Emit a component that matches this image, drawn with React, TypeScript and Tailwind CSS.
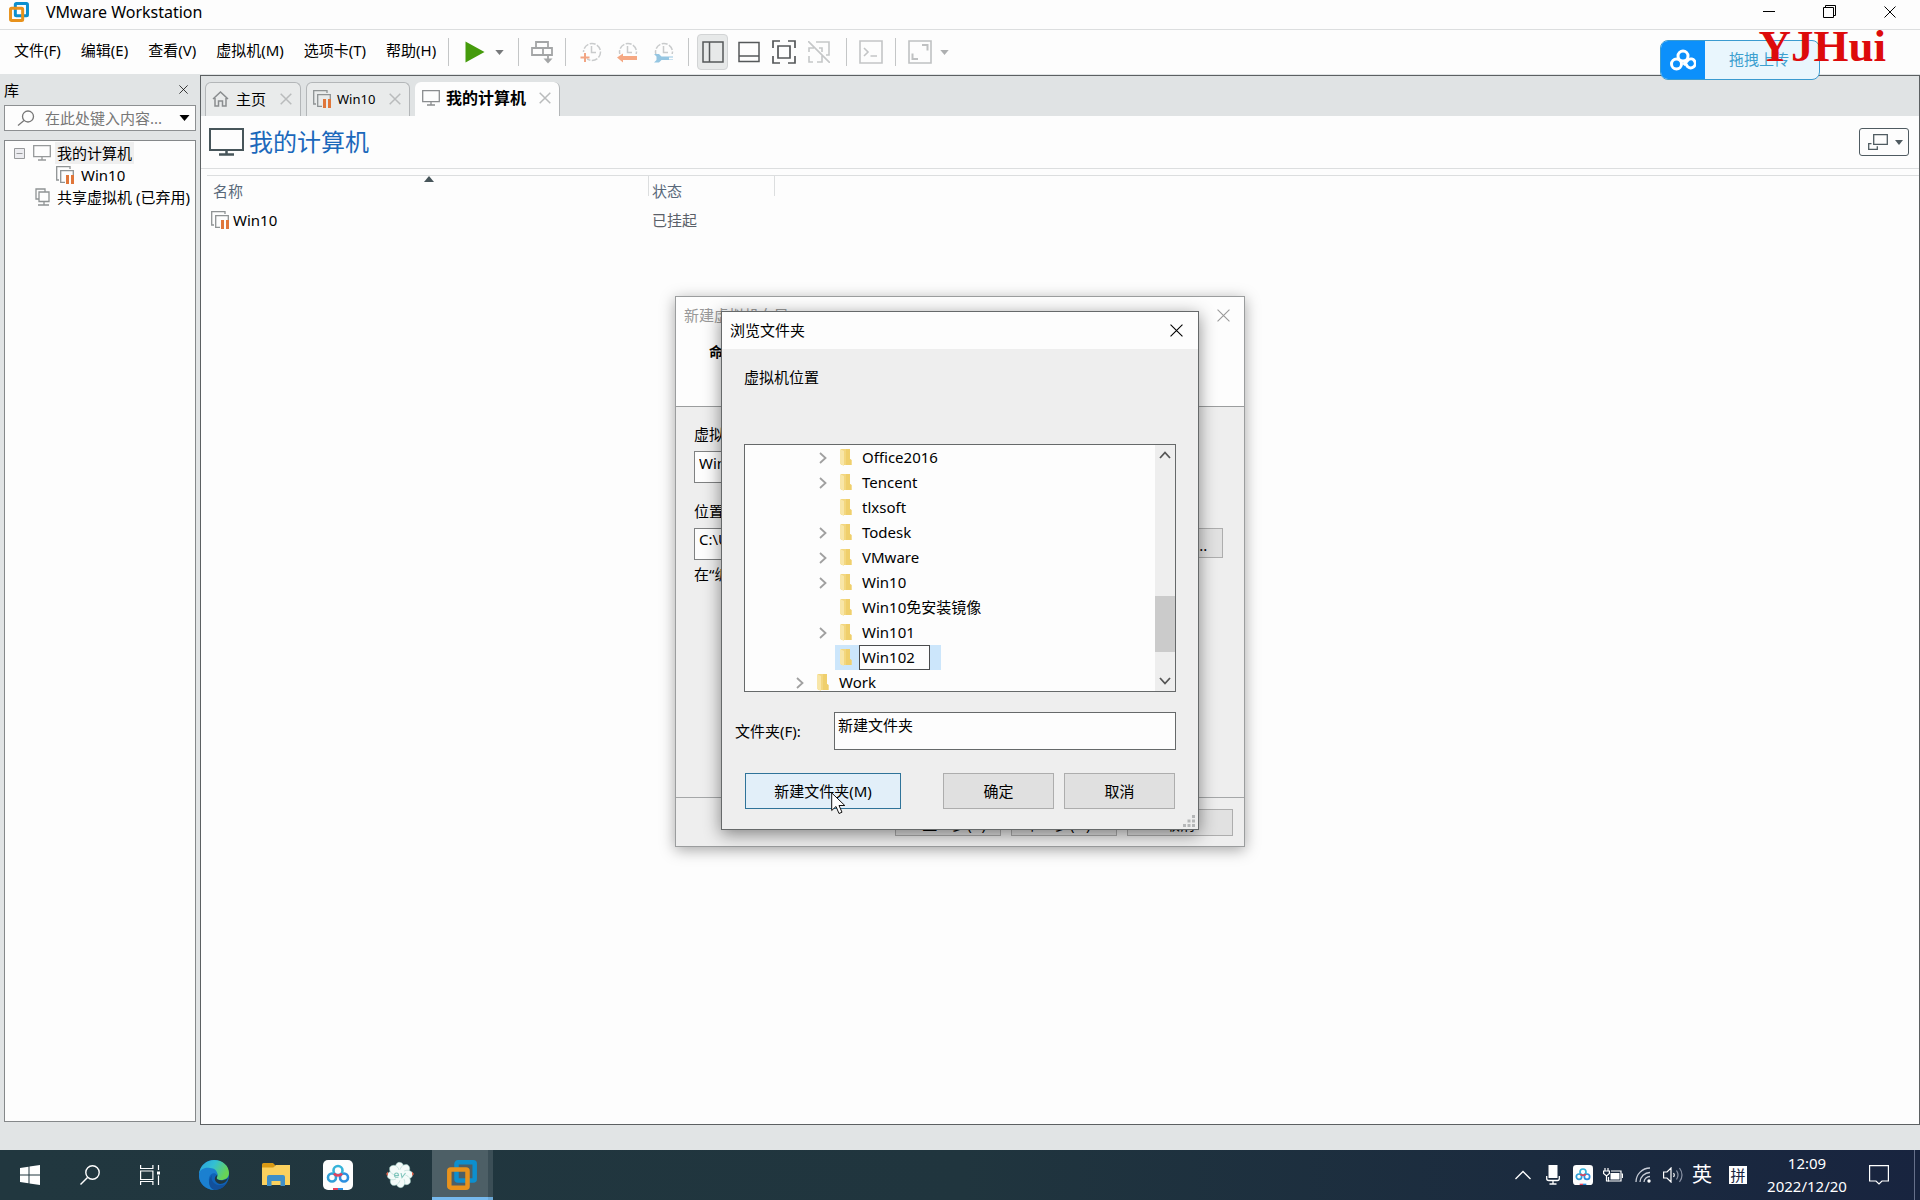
import React, { useState } from 'react';

type IconProps = { className?: string };

const VmLogo = ({ className }: IconProps) => (
  <svg viewBox="0 0 30 30" className={className} fill="none" strokeWidth="4.500">
    <rect x="9.500" y="2.300" width="18.200" height="18.200" rx="1.500" stroke="#0d8fce" />
    <rect x="2.300" y="9.500" width="18.200" height="18.200" rx="1.500" stroke="#e8921c" />
  </svg>
);

const CloseIcon = ({ className }: IconProps) => (
  <svg viewBox="0 0 12 12" className={className} stroke="currentColor" fill="none">
    <path d="M.5.5l11 11M11.5.5l-11 11" />
  </svg>
);

const TabCloseIcon = () => (
  <svg viewBox="0 0 12 12" className="size-3" stroke="#b9bbbc" strokeWidth="1.500" fill="none">
    <path d="M.7.7l10.600 10.600M11.300.7L.7 11.300" />
  </svg>
);

const Caret = ({ className }: IconProps) => (
  <svg viewBox="0 0 10 6" className={className} fill="currentColor">
    <path d="M0 0h10L5 6z" />
  </svg>
);

const MonitorIcon = ({ className }: IconProps) => (
  <svg viewBox="0 0 18 16" className={className} fill="none" stroke="currentColor" strokeWidth="1.300">
    <path d="M.7.7h16.600v11H.7zM9 12v3M5 15h8" />
  </svg>
);

const SuspendedVmIcon = ({ className }: IconProps) => (
  <svg viewBox="0 0 19 18" className={className} fill="none">
    <path d="M3 14H.7V.7H14V3" stroke="#8f9394" strokeWidth="1.300" />
    <path d="M9 16.300H4.700V4.700h12.600V9" stroke="#8f9394" strokeWidth="1.300" />
    <path d="M10 9h3v9h-3zM15 9h3v9h-3z" fill="#e0763a" />
  </svg>
);

const CloudRings = ({ className }: IconProps) => (
  <svg viewBox="0 0 26 22" className={className} fill="none" stroke="currentColor" strokeWidth="3">
    <circle cx="13" cy="7" r="5" />
    <circle cx="6.500" cy="15" r="5" />
    <path d="M14 12l3.500 5.500a4.500 4.500 0 1 0 1-7l-5 5.500" />
  </svg>
);

const NetdiskRings = ({ className }: IconProps) => (
  <svg viewBox="0 0 30 30" className={className}>
    <rect width="30" height="30" rx="5" fill="#fdfdfd" />
    <g fill="none" strokeWidth="2.600">
      <circle cx="9" cy="17.500" r="4" stroke="#2f9fd8" />
      <circle cx="21" cy="17.500" r="4" stroke="#2b8fe0" />
      <circle cx="15" cy="10.500" r="4.500" stroke="#35b3d9" />
      <path d="M11 13.500a5 5 0 0 0 8 0" stroke="#e2405c" />
    </g>
    <path d="M10 28h5v2h-5z" fill="#e2405c" />
    <path d="M15 28h5v2h-5z" fill="#2b8fe0" />
  </svg>
);

const MENUS = ['文件(F)', '编辑(E)', '查看(V)', '虚拟机(M)', '选项卡(T)', '帮助(H)'];

const Separator = () => <span className="h-7 w-px shrink-0 bg-[#c4c6c7]" />;

const SnapshotClock = ({ children }: { children: React.ReactNode }) => (
  <svg viewBox="0 0 22 22" className="size-[22px]" fill="none">
    <g stroke="#c9cbcc" strokeWidth="1.500">
      <circle cx="12" cy="11" r="8.500" strokeDasharray="6 1.500" />
      <path d="M11.500 5v6.500H16" />
    </g>
    {children}
  </svg>
);

const Toolbar = () => (
  <div className="flex h-[45px] shrink-0 items-center border-t border-[#dcdedf] pl-3.5">
    <nav className="flex gap-5 pb-1">
      {MENUS.map((menu) => (
        <button key={menu}>{menu}</button>
      ))}
    </nav>
    <div className="ml-3 flex items-center">
      <Separator />
      <button aria-label="开机" className="ml-4">
        <svg viewBox="0 0 20 22" className="h-[22px] w-5" fill="#459b0c">
          <path d="M.5.5L19.500 11 .5 21.500z" />
        </svg>
      </button>
      <button aria-label="电源选项" className="ml-2.5 mr-3.5 text-[#77797b]">
        <Caret className="h-[5px] w-[9px]" />
      </button>
      <Separator />
      <button aria-label="发送按键" className="mx-3">
        <svg viewBox="0 0 22 24" className="h-6 w-[22px]" fill="none" stroke="#a3a5a6" strokeWidth="1.800">
          <path d="M5 8V2h12v6M1 8h20v7H1zM12 8v7M17 14v8" />
          <path d="M12.500 18.500h9L17 23.500z" fill="#a3a5a6" stroke="none" />
        </svg>
      </button>
      <Separator />
      <button aria-label="拍摄快照" className="ml-3.5">
        <SnapshotClock>
          <path d="M0 11h7v11H0z" fill="#fdfdfd" />
          <path d="M5 12v9M.5 16.500h9" stroke="#f2a583" strokeWidth="2" />
        </SnapshotClock>
      </button>
      <button aria-label="恢复快照" className="ml-3.5">
        <SnapshotClock>
          <path d="M0 13h22v9H0z" fill="#fdfdfd" />
          <path d="M1 16.500L7 12.500v2.500h14v4H7v2.500z" fill="#f5a883" />
        </SnapshotClock>
      </button>
      <button aria-label="管理快照" className="ml-3.5 mr-3.5">
        <SnapshotClock>
          <path d="M0 13h22v9H0z" fill="#fdfdfd" />
          <path d="M2 13h5l2.500 2.500H21v3.500H9.500L7 21.500H2L4.500 19v-3.500z" fill="#95c6e2" />
          <path d="M17 16.500h5v2h-5z" fill="#fdfdfd" />
        </SnapshotClock>
      </button>
      <Separator />
      <button aria-label="显示库" className="ml-2 flex h-9 w-[31px] items-center justify-center rounded border border-[#d2d4d5] bg-[#e7e9e9]">
        <svg viewBox="0 0 22 22" className="size-[22px]" fill="none" stroke="#55585a" strokeWidth="1.500">
          <path d="M1 1h20v20H1zM7.500 1v20" />
        </svg>
      </button>
      <button aria-label="显示缩略图栏" className="ml-2.5">
        <svg viewBox="0 0 22 22" className="size-[22px]" fill="none" stroke="#55585a" strokeWidth="1.500">
          <path d="M1 1.500h20v19H1zM1 15h20" />
        </svg>
      </button>
      <button aria-label="全屏" className="ml-3">
        <svg viewBox="0 0 24 24" className="size-6" fill="none" stroke="#55585a" strokeWidth="1.700">
          <path d="M1 8V1h7M16 1h7v7M23 16v7h-7M8 23H1v-7M6 6h12v12H6z" />
        </svg>
      </button>
      <button aria-label="Unity" className="ml-3 mr-4">
        <svg viewBox="0 0 22 22" className="size-[22px]" fill="none" stroke="#c5c7c8" strokeWidth="1.600">
          <path d="M8 1h13v13h-3M6 7H1v4M1 15v6h4M9 21h5v-7M11 7h3v4M0 0l22 22" />
        </svg>
      </button>
      <Separator />
      <button aria-label="控制台" className="mx-3">
        <svg viewBox="0 0 24 24" className="size-6" fill="none" stroke="#c3c5c6" strokeWidth="1.600">
          <path d="M1 1h22v22H1zM5 8l4 4-4 4M11.500 16H18" />
        </svg>
      </button>
      <Separator />
      <button aria-label="自由拉伸" className="ml-3">
        <svg viewBox="0 0 24 24" className="size-6" fill="none" stroke="#bfc1c2" strokeWidth="1.600">
          <path d="M1 1h22v22H1z" />
          <path d="M14 5h5.500v5.500M4.500 13.500v5.500H10" strokeWidth="2" />
        </svg>
      </button>
      <button aria-label="拉伸选项" className="ml-2 text-[#adafb0]">
        <Caret className="h-[5px] w-[9px]" />
      </button>
    </div>
  </div>
);

const Library = () => (
  <aside className="flex w-[200px] shrink-0 flex-col pb-[3px] pl-1 pr-1">
    <div className="flex h-[31px] items-center justify-between pr-2">
      <h2>库</h2>
      <button aria-label="关闭库">
        <CloseIcon className="size-[9px]" />
      </button>
    </div>
    <div className="flex h-[26px] items-center border border-[#8d9092] bg-[#fdfdfd] pl-3 pr-[5px] text-[#777]">
      <svg viewBox="0 0 18 16" className="h-4 w-[18px] shrink-0" fill="none" stroke="currentColor" strokeWidth="1.300">
        <circle cx="11" cy="6.500" r="5.500" />
        <path d="M7 10.500L1 15.500" />
      </svg>
      <input
        aria-label="搜索库"
        placeholder="在此处键入内容..."
        className="ml-2.5 w-full min-w-0 flex-1 bg-transparent outline-none placeholder:text-[#777]"
      />
      <button aria-label="搜索选项" className="text-black">
        <Caret className="h-1.5 w-[11px]" />
      </button>
    </div>
    <ul className="mt-[9px] flex-1 overflow-hidden whitespace-nowrap border border-[#85888a] bg-[#fdfdfd] pt-px leading-[22px]">
      <li className="flex items-center pl-[9px]">
        <svg viewBox="0 0 11 11" className="size-[11px]" fill="#ececf0" stroke="#97999b">
          <path d="M.5.5h10v10H.5zM2.500 5.500h6" />
        </svg>
        <MonitorIcon className="ml-2 h-4 w-[18px] text-[#96999a]" />
        <span className="ml-1 bg-[#efefef] px-0.5">我的计算机</span>
      </li>
      <li className="flex items-center pl-[51px]">
        <SuspendedVmIcon className="h-[18px] w-[19px]" />
        <span className="ml-1.5">Win10</span>
      </li>
      <li className="flex items-center pl-[30px]">
        <svg viewBox="0 0 15 18" className="h-[18px] w-[15px]" fill="none" stroke="#8f9394" strokeWidth="1.300">
          <path d="M4 11H1V1h9v3M4 4h10v9.500H4zM9 14v3M3 17h11" />
        </svg>
        <span className="ml-[7px]">共享虚拟机 (已弃用)</span>
      </li>
    </ul>
  </aside>
);

const Tabs = () => (
  <div className="flex h-10 items-end bg-[#e0e3e4] pl-1">
    <div className="flex h-[34px] w-24 items-center rounded-t-md border border-b-0 border-[#b3b6b8] bg-[#e9ebeb] pb-0.5 pl-1.5 pr-2">
      <svg viewBox="0 0 17 16" className="h-4 w-[17px]" fill="none" stroke="#8a8d8f" strokeWidth="1.500">
        <path d="M1 8l7.500-7L16 8M3 7v8h3.500v-5h4v5H14V7" />
      </svg>
      <button className="ml-[7px]">主页</button>
      <button aria-label="关闭主页" className="ml-auto">
        <TabCloseIcon />
      </button>
    </div>
    <div className="ml-[5px] flex h-[34px] w-[104px] items-center rounded-t-md border border-b-0 border-[#b3b6b8] bg-[#e9ebeb] pb-0.5 pl-1.5 pr-2">
      <SuspendedVmIcon className="h-[18px] w-[19px]" />
      <button className="ml-[5px] text-[13px]">Win10</button>
      <button aria-label="关闭 Win10" className="ml-auto">
        <TabCloseIcon />
      </button>
    </div>
    <div className="ml-[5px] flex h-[34px] w-[145px] items-center rounded-t-md border-r border-[#b3b6b8] bg-[#fdfdfd] pb-0.5 pl-[7px] pr-2">
      <MonitorIcon className="h-4 w-[18px] text-[#8a8d8f]" />
      <button className="ml-1.5 whitespace-nowrap text-base font-bold">我的计算机</button>
      <button aria-label="关闭我的计算机" className="ml-auto">
        <TabCloseIcon />
      </button>
    </div>
  </div>
);

const Workspace = () => (
  <main className="mt-px flex flex-1 flex-col border border-[#5c6062] bg-[#fdfdfd]">
    <Tabs />
    <div className="flex h-[53px] items-center border-b border-[#dcdedf] pl-2 pr-2.5">
      <svg viewBox="0 0 35 28" className="h-7 w-[35px]" fill="none" stroke="#47555a">
        <path d="M1 1h33v21H1z" strokeWidth="2" />
        <path d="M17.500 22v4M10 26.500h15" strokeWidth="2.500" />
      </svg>
      <h1 className="ml-[5px] text-2xl text-[#1b68bb]">我的计算机</h1>
      <button aria-label="查看模式" className="ml-auto flex h-7 w-[50px] items-center rounded-[3px] border border-[#4f5b61] pl-2 text-[#4f5b61]">
        <svg viewBox="0 0 20 16" className="h-4 w-5" fill="none" stroke="currentColor" strokeWidth="1.300">
          <path d="M5.700.7h13.600v9.600H5.700zM3.500 9.700H.7v5.600h8.600v-3" />
        </svg>
        <Caret className="ml-[7px] h-[5px] w-2" />
      </button>
    </div>
    <table className="ml-1.5 mt-1.5 table-fixed border-t border-[#dcdedf] text-left text-[#5a6068]">
      <thead>
        <tr className="h-[30px]">
          <th className="relative w-[442px] pl-1.5 font-normal text-[#58687a]">
            名称
            <Caret className="absolute right-[215px] top-0 h-1.5 w-2.5 rotate-180 text-[#47555a]" />
            <span className="absolute right-0 top-0 h-5 w-px bg-[#dcdedf]" />
          </th>
          <th className="relative w-[126px] pl-[3px] font-normal text-[#58687a]">
            状态
            <span className="absolute right-0 top-0 h-5 w-px bg-[#dcdedf]" />
          </th>
          <th />
        </tr>
      </thead>
      <tbody>
        <tr className="h-7">
          <td>
            <div className="flex items-center pl-1 text-black">
              <SuspendedVmIcon className="h-[18px] w-[19px]" />
              <span className="ml-[3px]">Win10</span>
            </div>
          </td>
          <td className="pl-[3px]">已挂起</td>
          <td />
        </tr>
      </tbody>
    </table>
  </main>
);

const WizardDialog = () => (
  <section
    aria-label="新建虚拟机向导"
    className="absolute left-1/2 top-[296px] flex h-[551px] w-[570px] -translate-x-1/2 flex-col border border-[#9b9d9e] bg-[#eee] shadow-[0_3px_14px_rgba(0,0,0,0.35)]"
  >
    <header className="h-[110px] border-b border-[#9b9d9e] bg-[#fdfdfd] pl-2 pr-3.5">
      <div className="flex h-9 items-center justify-between text-[#999]">
        <span>新建虚拟机向导</span>
        <button aria-label="关闭向导">
          <CloseIcon className="size-[13px]" />
        </button>
      </div>
      <h2 className="pl-[25px] pt-[9px] text-sm font-bold">命名虚拟机</h2>
    </header>
    <div className="flex flex-1 flex-col pl-[18px] pr-[21px] pt-[17px]">
      <label htmlFor="vm-name">虚拟机名称(V):</label>
      <input id="vm-name" defaultValue="Windows 10 x64" className="mr-[101px] mt-[7px] h-8 border border-[#7f8182] bg-[#fdfdfd] px-1 pb-2" />
      <label htmlFor="vm-path" className="mt-[18px]">位置(L):</label>
      <div className="mt-[7px] flex gap-2">
        <input id="vm-path" defaultValue="C:\Users\Documents" className="h-8 min-w-0 flex-1 border border-[#7f8182] bg-[#fdfdfd] px-1 pb-2.5" />
        <button className="h-[30px] w-[92px] border border-[#adadad] bg-[#e1e1e1] pt-1">浏览(R)...</button>
      </div>
      <p className="mt-1">在“编辑”&gt;“首选项”中可更改默认位置。</p>
    </div>
    <footer className="flex h-[49px] justify-end gap-2.5 border-t border-[#a5a7a8] pr-[11px] pt-[11px]">
      {['< 上一步(B)', '下一步(N) >', '取消'].map((text) => (
        <button key={text} className="h-[27px] w-[106px] border border-[#adadad] bg-[#e1e1e1] pt-0.5">
          {text}
        </button>
      ))}
    </footer>
  </section>
);

const FolderIcon = () => (
  <svg viewBox="0 0 12 17" className="h-[17px] w-3 shrink-0">
    <path d="M1 0h9v10l1.500 1v5H1z" fill="#f3d780" />
    <path d="M6 0h4v10l1.500 1v5H6z" fill="#efcf6c" />
    <path d="M0 0l4 2v15l-4-2z" fill="#f8e6a8" />
  </svg>
);

type Folder = { name: string; expandable: boolean };

const FOLDERS: Folder[] = [
  { name: 'Office2016', expandable: true },
  { name: 'Tencent', expandable: true },
  { name: 'tlxsoft', expandable: false },
  { name: 'Todesk', expandable: true },
  { name: 'VMware', expandable: true },
  { name: 'Win10', expandable: true },
  { name: 'Win10免安装镜像', expandable: false },
  { name: 'Win101', expandable: true },
];

const Chevron = ({ className }: IconProps) => (
  <svg viewBox="0 0 8 12" className={className} fill="none" stroke="currentColor" strokeWidth="1.800">
    <path d="M1 1l5.500 5L1 11" />
  </svg>
);

const BrowseDialog = () => {
  const [newName, setNewName] = useState('Win102');
  const [folder, setFolder] = useState('新建文件夹');

  return (
    <section
      aria-label="浏览文件夹"
      className="absolute left-1/2 top-[311px] h-[519px] w-[478px] -translate-x-1/2 border border-[#66696a] bg-[#eee] shadow-[0_4px_16px_rgba(0,0,0,0.45)]"
    >
      <header className="flex h-[37px] items-center justify-between bg-[#fdfdfd] pb-px pl-2 pr-[15px]">
        <h2>浏览文件夹</h2>
        <button aria-label="关闭">
          <CloseIcon className="size-[13px]" />
        </button>
      </header>
      <p className="ml-[22px] mt-[18px] leading-5">虚拟机位置</p>

      <div className="mx-[22px] mt-[57px] flex h-[248px] overflow-hidden border border-[#66696a] bg-[#fdfdfd]">
        <ul className="flex-1 leading-[25px]">
          {FOLDERS.map(({ name, expandable }) => (
            <li key={name} className="flex h-[25px] items-center pl-[74px]">
              <Chevron className={expandable ? 'h-3 w-2 text-[#a0a0a0]' : 'invisible h-3 w-2'} />
              <span className="ml-[13px] mr-2.5">
                <FolderIcon />
              </span>
              {name}
            </li>
          ))}
          <li className="flex h-[25px] items-center pl-[90px]">
            <div className="flex items-center bg-[#cce6fb] pl-[5px] pr-[11px]">
              <FolderIcon />
              <input
                aria-label="文件夹名称"
                value={newName}
                onChange={(e) => setNewName(e.target.value)}
                className="ml-[7px] h-[25px] w-[71px] border border-[#4a4c4e] bg-[#fdfdfd] pl-0.5 outline-none"
              />
            </div>
          </li>
          <li className="flex h-[25px] items-center pl-[51px]">
            <Chevron className="h-3 w-2 text-[#a0a0a0]" />
            <span className="ml-[13px] mr-2.5">
              <FolderIcon />
            </span>
            Work
          </li>
        </ul>
        <div className="flex w-5 flex-col items-center bg-[#eee] text-[#555]">
          <Chevron className="mt-1 h-3 w-2 -rotate-90" />
          <div className="mt-[135px] h-14 w-full bg-[#cbcbcb]" />
          <Chevron className="mb-1 mt-auto h-3 w-2 rotate-90" />
        </div>
      </div>

      <div className="ml-[13px] mr-[22px] mt-5 flex items-center">
        <label htmlFor="folder" className="w-[99px]">文件夹(F):</label>
        <input
          id="folder"
          value={folder}
          onChange={(e) => setFolder(e.target.value)}
          className="h-[38px] min-w-0 flex-1 border border-[#66696a] bg-[#fdfdfd] px-[3px] pb-3.5 outline-none"
        />
      </div>

      <div className="mx-[23px] mt-[23px] flex h-9">
        <button className="w-[156px] border border-[#2f7399] bg-[#e2eff9]">新建文件夹(M)</button>
        <button className="ml-auto w-[111px] border border-[#adadad] bg-[#e0e0e0]">确定</button>
        <button className="ml-2.5 w-[111px] border border-[#adadad] bg-[#e0e0e0]">取消</button>
      </div>

      <svg viewBox="0 0 12 12" className="absolute bottom-0.5 right-[3px] size-3" fill="#b5b7b8">
        <path d="M9 0h3v3H9zM9 4.500h3v3H9zM4.500 4.500h3v3h-3zM9 9h3v3H9zM4.500 9h3v3h-3zM0 9h3v3H0z" />
      </svg>
      <svg viewBox="0 0 15 23" className="absolute left-[109px] top-[480px] h-[23px] w-[15px]" fill="#fff" stroke="#111">
        <path d="M.7.9v17.600l4.300-4 3 7 3-1.300-3-6.700h5.800z" />
      </svg>
    </section>
  );
};

const UploadWidget = () => (
  <button className="absolute right-[100px] top-10 flex h-10 w-40 overflow-hidden rounded-lg border border-[#3b9bd0] bg-[#e9f6fd]">
    <span className="flex h-full w-11 items-center justify-center bg-[#0c90fb] text-white">
      <CloudRings className="h-[22px] w-[26px]" />
    </span>
    <span className="flex h-full flex-1 items-center justify-center pb-0.5 pr-1.5 text-[#3d9fcf]">拖拽上传</span>
  </button>
);

const Taskbar = () => (
  <footer className="flex h-[50px] shrink-0 items-center bg-linear-to-r from-[#21373f] via-[#20353e] to-[#18243f] text-white">
    <button aria-label="开始" className="flex w-[60px] justify-center">
      <svg viewBox="0 0 20 20" className="size-5" fill="#fff">
        <path d="M0 3l8.500-1.200v7.700H0zM9.500 1.600L20 0v9.500H9.500zM0 10.500h8.500v7.700L0 17zM9.500 10.500H20V20L9.500 18.400z" />
      </svg>
    </button>
    <button aria-label="搜索" className="flex w-[60px] justify-center">
      <svg viewBox="0 0 20 20" className="size-5" fill="none" stroke="#fff" strokeWidth="1.400">
        <circle cx="12.500" cy="7.500" r="6.700" />
        <path d="M7.500 12.500L.5 19.500" />
      </svg>
    </button>
    <button aria-label="任务视图" className="flex w-[60px] justify-center">
      <svg viewBox="0 0 20 20" className="size-5" fill="none" stroke="#fff" strokeWidth="1.200">
        <path d="M.6 0v3.500h12.300V0M.6 6h12.300v8.500H.6zM.6 20v-3.500h12.300V20M18.500 0v5M18.500 10.500V20" />
        <path d="M17 6.500h3v3h-3z" fill="#fff" stroke="none" />
      </svg>
    </button>
    <button aria-label="Edge" className="ml-[3px] flex w-[62px] justify-center">
      <svg viewBox="0 0 30 30" className="size-[30px]">
        <defs>
          <linearGradient id="edge" x1="0" y1="0" x2="1" y2="0.400">
            <stop offset="0" stopColor="#2a9fdc" />
            <stop offset="0.500" stopColor="#33bfd4" />
            <stop offset="1" stopColor="#68d454" />
          </linearGradient>
        </defs>
        <circle cx="15" cy="15" r="15" fill="#0f63b8" />
        <path d="M0 14C1 5 8 0 15 0c9 0 15 6 15 13 0 5-4 7-8 7-3 0-5-1-4-3 2-3-1-7-6-7-6 0-11 2-12 4z" fill="url(#edge)" />
        <path d="M0 14c1-5 6-7 11-6 5 0 8 4 7 7-2-3-7-2-8 3-1 6 3 11 8 12C7 31-1 23 0 14z" fill="#1b80d0" />
        <path d="M13 15c-2 6 3 11 9 10 3 0 5-1 6-3-2 5-7 8-13 8-5-2-7-9-2-15z" fill="#12509b" />
        <path d="M18 15c1 1-1 3 0 4 2 2 8 2 11-1-1 3-4 6-8 6-5-1-7-6-3-9z" fill="#21373f" />
      </svg>
    </button>
    <button aria-label="文件资源管理器" className="flex w-[62px] justify-center">
      <svg viewBox="0 0 28 24" className="h-6 w-7">
        <path d="M0 1.500Q0 0 1.500 0H11l2.500 2.500L11 5H0z" fill="#d99a14" />
        <path d="M0 4.500h11l3-2.500h14v20H0z" fill="#fbd15e" />
        <path d="M5 23V14q0-2 2-2h14q2 0 2 2v9h-4.500v-5h-9v5z" fill="#3f8fc8" />
      </svg>
    </button>
    <button aria-label="百度网盘" className="flex w-[62px] justify-center">
      <NetdiskRings className="size-[30px]" />
    </button>
    <button aria-label="EV录屏" className="flex w-[62px] justify-center">
      <svg viewBox="0 0 28 28" className="size-7">
        {[0, 45, 90, 135, 180, 225, 270, 315].map((angle) => (
          <path
            key={angle}
            d="M14 14C8 10 8 4 12 1.500c4-1 7 3 5.500 7z"
            fill="#f4fbf9"
            stroke="#9fcfc5"
            strokeWidth="0.500"
            transform={`rotate(${angle} 14 14)`}
          />
        ))}
        <circle cx="14" cy="14" r="5.500" fill="#f4fbf9" />
        <path d="M0 13l2-2.500V15zM28 13l-2-2.500V15z" fill="#e0634c" />
        <path d="M8.500 14.500h4q0-2.500-2-2.500t-2 2.500 4 1.500M15 12l1 4.500 3.500-4.500" fill="none" stroke="#7fc5bb" strokeWidth="1.100" />
      </svg>
    </button>
    <button aria-label="VMware Workstation" className="ml-px flex h-full w-14 items-center justify-center border-b-[3px] border-[#76b9ed] bg-[#4d5f66] pl-1 pt-[3px]">
      <VmLogo className="size-[30px]" />
    </button>
    <span className="h-full w-[5px] border-b-[3px] border-[#6ba8d7] bg-[#3b4e56]" />

    <div className="ml-auto flex h-full items-center">
      <button aria-label="显示隐藏的图标" className="flex w-[30px] justify-center">
        <svg viewBox="0 0 16 10" className="h-2.5 w-4" fill="none" stroke="#fff" strokeWidth="1.300">
          <path d="M.5 9L8 1.500 15.500 9" />
        </svg>
      </button>
      <button aria-label="麦克风" className="flex w-[30px] justify-center">
        <svg viewBox="0 0 14 20" className="h-5 w-3.5" fill="none" stroke="#fff" strokeWidth="1.300">
          <path d="M2.500 0h9v13h-9z" fill="#fff" stroke="none" />
          <path d="M.7 11v2.500q0 2 2 2h8.600q2 0 2-2V11M7 15.500V19M3.500 19h7" />
        </svg>
      </button>
      <button aria-label="百度网盘托盘" className="flex w-[30px] justify-center">
        <NetdiskRings className="size-5" />
      </button>
      <button aria-label="电池" className="flex w-[30px] justify-center">
        <svg viewBox="0 0 20 15" className="h-[15px] w-5" fill="none" stroke="#fff" strokeWidth="1.200">
          <path d="M8 3h10v10H5.500V9" />
          <path d="M7.500 5h9v6.500h-9z" fill="#fff" stroke="none" />
          <path d="M18.500 6h1v4M2 0v3M5 0v3M.6 3h5.800v2.500L3.500 8 .6 5.500zM3.500 8v5H6" />
        </svg>
      </button>
      <button aria-label="网络" className="flex w-[30px] justify-center">
        <svg viewBox="0 0 16 16" className="size-4" fill="none" stroke="#c9ced8" strokeWidth="1.300">
          <path d="M1 15A14 14 0 0 1 15 1M5 15A10 10 0 0 1 15 5.500M9 15a6 6 0 0 1 6-5.500" />
          <circle cx="14" cy="14" r="1.700" fill="#fff" stroke="none" />
        </svg>
      </button>
      <button aria-label="音量" className="flex w-[30px] justify-center">
        <svg viewBox="0 0 20 16" className="h-4 w-5" fill="none" stroke="#fff" strokeWidth="1.200">
          <path d="M.6 5H4l4-4v14l-4-4H.6zM10.500 6q1.500 2 0 4" />
          <path d="M13.500 3.500q3 4.500 0 9M16.500 1q5 7 0 14" stroke="#8a93a5" />
        </svg>
      </button>
      <button className="w-7 text-center text-xl leading-6">英</button>
      <button className="flex w-11 justify-center">
        <span className="flex size-[18px] items-center justify-center bg-white leading-none text-[#18243f]">拼</span>
      </button>
      <time className="w-[94px] pb-px text-center leading-[23px]">
        12:09
        <br />
        2022/12/20
      </time>
      <button aria-label="通知" className="flex w-[50px] justify-center">
        <svg viewBox="0 0 20 20" className="size-5" fill="none" stroke="#fff" strokeWidth="1.200">
          <path d="M.6.6h18.800v15.400H13L10 19l-3-3H.6z" />
        </svg>
      </button>
      <span className="ml-2.5 mr-[5px] h-full w-px bg-[#66708a]" />
    </div>
  </footer>
);

const App = () => {
  return (
    <div className="relative flex h-screen flex-col overflow-hidden bg-[#fdfdfd] font-['Noto_Sans','Noto_Sans_CJK_SC',sans-serif] text-[15px] leading-5 text-black">
      <header className="flex h-[29px] shrink-0 items-center pb-1.5 pl-[9px] pr-6">
        <VmLogo className="size-5" />
        <span className="ml-[17px] text-base leading-5">VMware Workstation</span>
        <div className="ml-auto flex items-center gap-12">
          <button aria-label="最小化">
            <svg viewBox="0 0 12 12" className="size-3" stroke="#000">
              <path d="M0 5.500h12" />
            </svg>
          </button>
          <button aria-label="还原">
            <svg viewBox="0 0 13 13" className="size-[13px]" fill="none" stroke="#000">
              <path d="M.5 2.500h10v10H.5zM2.500 2.500v-2h10v10h-2" />
            </svg>
          </button>
          <button aria-label="关闭窗口">
            <CloseIcon className="size-3" />
          </button>
        </div>
      </header>
      <Toolbar />
      <div className="flex min-h-0 flex-1 bg-[#e1e4e5]">
        <Library />
        <Workspace />
      </div>
      <div className="h-[25px] shrink-0 bg-[#e1e4e5]" />
      <Taskbar />

      <WizardDialog />
      <BrowseDialog />
      <UploadWidget />
      <span className="absolute right-[34px] top-6 font-['Liberation_Serif',serif] text-[45px] font-bold leading-[44px] text-[#dd0b0b]">YJHui</span>
    </div>
  );
};

export default App;
